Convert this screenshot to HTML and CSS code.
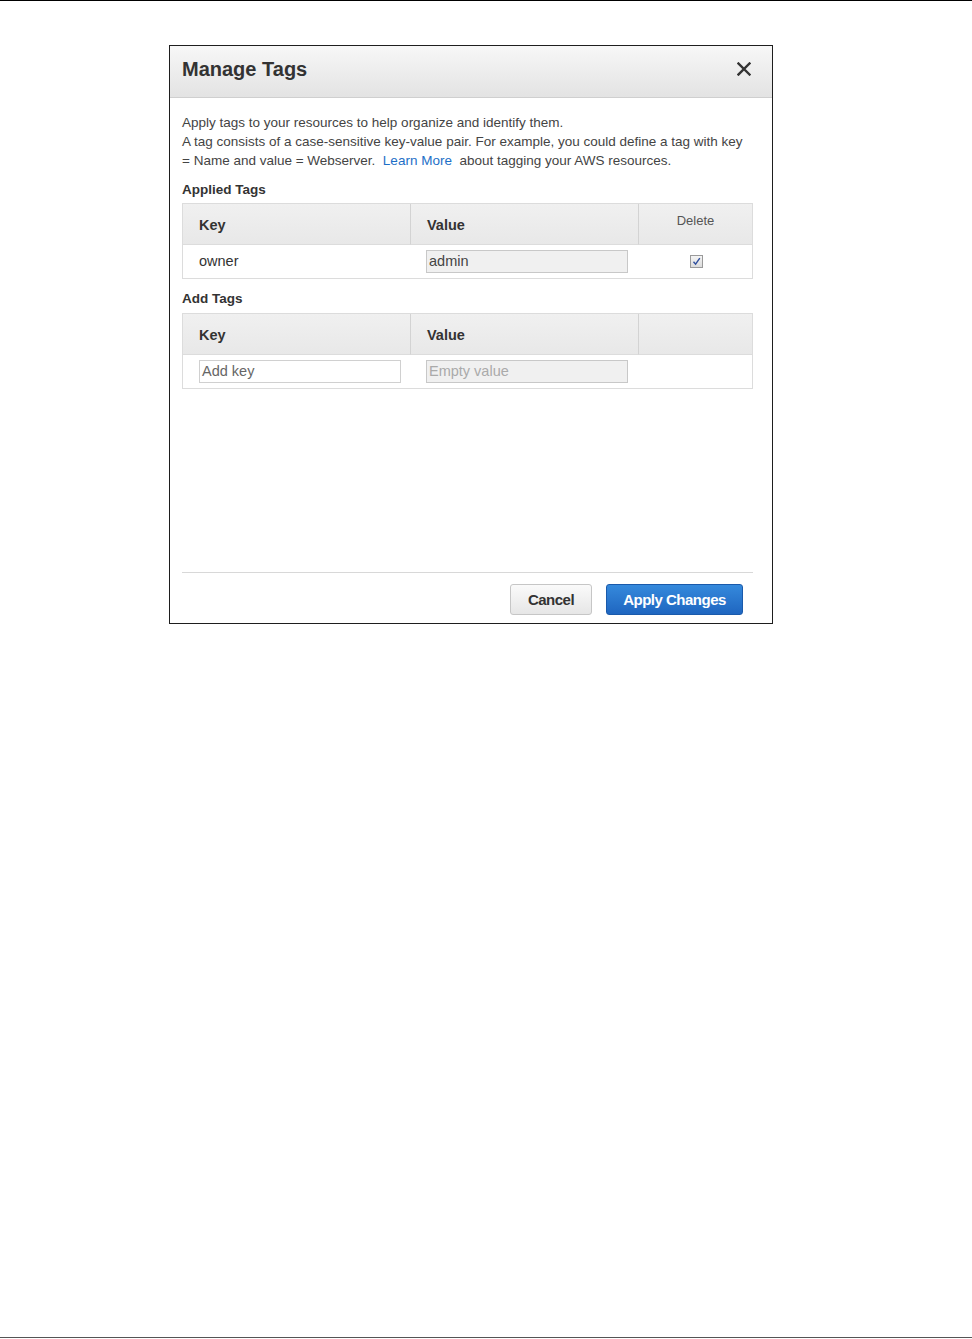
FILE: index.html
```html
<!DOCTYPE html>
<html>
<head>
<meta charset="utf-8">
<link rel="stylesheet" href="styles.css">
</head>
<body>
<div class="page">
  <div class="dialog">
    <div class="dlg-head">
      <h1 class="dlg-title">Manage Tags</h1>
      <svg class="close" width="14" height="14" viewBox="0 0 14 14"><path d="M1.5 1.5 L12.5 12.5 M12.5 1.5 L1.5 12.5" stroke="#333" stroke-width="2.4" stroke-linecap="square"/></svg>
    </div>
    <div class="dlg-body">
      <p class="intro">Apply tags to your resources to help organize and identify them.<br>A tag consists of a case-sensitive key-value pair. For example, you could define a tag with key<br>= Name and value = Webserver.&nbsp; <a class="link">Learn More</a>&nbsp; about tagging your AWS resources.</p>
      <div class="section-label section-first">Applied Tags</div>
      <div class="tag-table">
        <div class="th">Key</div>
        <div class="th">Value</div>
        <div class="th th-del">Delete</div>
        <div class="td td-key">owner</div>
        <div class="td"><div class="field field-gray">admin</div></div>
        <div class="td td-check"><span class="check"><svg width="9" height="9" viewBox="0 0 9 9"><path d="M1.5 4.8 L3.6 7.2 L7.8 1.2" fill="none" stroke="#2f4f9e" stroke-width="1.4"/></svg></span></div>
      </div>
      <div class="section-label">Add Tags</div>
      <div class="tag-table">
        <div class="th">Key</div>
        <div class="th">Value</div>
        <div class="th th-del"></div>
        <div class="td"><div class="field field-white">Add key</div></div>
        <div class="td"><div class="field field-gray placeholder">Empty value</div></div>
        <div class="td"></div>
      </div>
      <div class="dlg-foot">
        <button class="btn btn-cancel">Cancel</button>
        <button class="btn btn-primary">Apply Changes</button>
      </div>
    </div>
  </div>
</div>
</body>
</html>
```
FILE: styles.css
```css
html, body {
  margin: 0;
  padding: 0;
  background: #fff;
}
body {
  font-family: "Liberation Sans", Arial, sans-serif;
  color: #333;
}
.page {
  box-sizing: border-box;
  height: 1338px;
  border-top: 1px solid #000;
  border-bottom: 1px solid #555;
  padding-top: 44px;
  padding-left: 169px;
}
.dialog {
  box-sizing: border-box;
  width: 604px;
  height: 579px;
  border: 1px solid #1e1e1e;
  background: #fff;
}
.dlg-head {
  box-sizing: border-box;
  height: 52px;
  display: flex;
  align-items: center;
  justify-content: space-between;
  padding: 0 21px 0 12px;
  background: linear-gradient(#f7f7f7, #e3e3e3);
  border-bottom: 1px solid #cfcfcf;
}
.dlg-title {
  margin: 0;
  font-size: 20px;
  font-weight: bold;
  color: #333;
  padding-bottom: 5px;
}
.close {
  display: block;
  margin-bottom: 5px;
}
.dlg-body {
  padding: 15px 19px 0 12px;
}
.intro {
  margin: 0;
  font-size: 13.5px;
  line-height: 19px;
  color: #444;
  letter-spacing: 0;
}
.link {
  color: #1d6fc7;
}
.section-label {
  font-size: 13.5px;
  font-weight: bold;
  color: #333;
  line-height: 19px;
  margin-top: 10px;
  margin-bottom: 5px;
}
.section-first {
  margin-bottom: 4px;
}
.tag-table {
  display: grid;
  grid-template-columns: 228px 228px 1fr;
  grid-template-rows: 41px 33px;
  border: 1px solid #dcdcdc;
  margin-bottom: 10px;
}
.th {
  box-sizing: border-box;
  background: linear-gradient(#f0f0f0, #e8e8e8);
  border-bottom: 1px solid #dcdcdc;
  border-right: 1px solid #d3d3d3;
  font-size: 14.5px;
  font-weight: bold;
  color: #333;
  display: flex;
  align-items: center;
  padding-left: 16px;
  padding-top: 1px;
}
.th-del {
  border-right: none;
  justify-content: center;
  align-items: flex-start;
  padding: 9px 0 0 0;
  font-size: 13px;
  font-weight: normal;
  color: #555;
}
.td {
  display: flex;
  align-items: center;
  padding-left: 15px;
}
.td-key {
  padding-left: 16px;
  font-size: 14.5px;
  color: #333;
  padding-bottom: 2px;
}
.td-check {
  justify-content: center;
  padding-left: 0;
}
.field {
  box-sizing: border-box;
  width: 202px;
  height: 23px;
  border: 1px solid #c8c8c8;
  font-size: 14.5px;
  line-height: 21px;
  padding-left: 2px;
  color: #444;
}
.field-gray {
  background: #f0f0f0;
}
.field-white {
  background: #fff;
  border-color: #d0d0d0;
  color: #666;
  margin-left: 1px;
}
.placeholder {
  color: #aaa;
}
.check {
  box-sizing: border-box;
  width: 13px;
  height: 13px;
  border: 1px solid #9a9a9a;
  background: linear-gradient(#f4f4f4, #dcdcdc);
  display: flex;
  align-items: center;
  justify-content: center;
  margin-left: 2px;
}
.check svg {
  display: block;
}
.dlg-foot {
  margin-top: 183px;
  border-top: 1px solid #d8d8d8;
  padding: 11px 10px 0 0;
  display: flex;
  justify-content: flex-end;
  gap: 14px;
}
.btn {
  box-sizing: border-box;
  height: 31px;
  border-radius: 3px;
  font-family: "Liberation Sans", Arial, sans-serif;
  font-size: 15px;
  font-weight: bold;
  letter-spacing: -0.5px;
  padding: 0;
  cursor: pointer;
}
.btn-cancel {
  width: 82px;
  background: linear-gradient(#fafafa, #e6e6e6);
  border: 1px solid #c6c6c6;
  color: #333;
}
.btn-primary {
  width: 137px;
  background: linear-gradient(#3589dc, #1f66c0);
  border: 1px solid #1a5aab;
  color: #fff;
}
```
